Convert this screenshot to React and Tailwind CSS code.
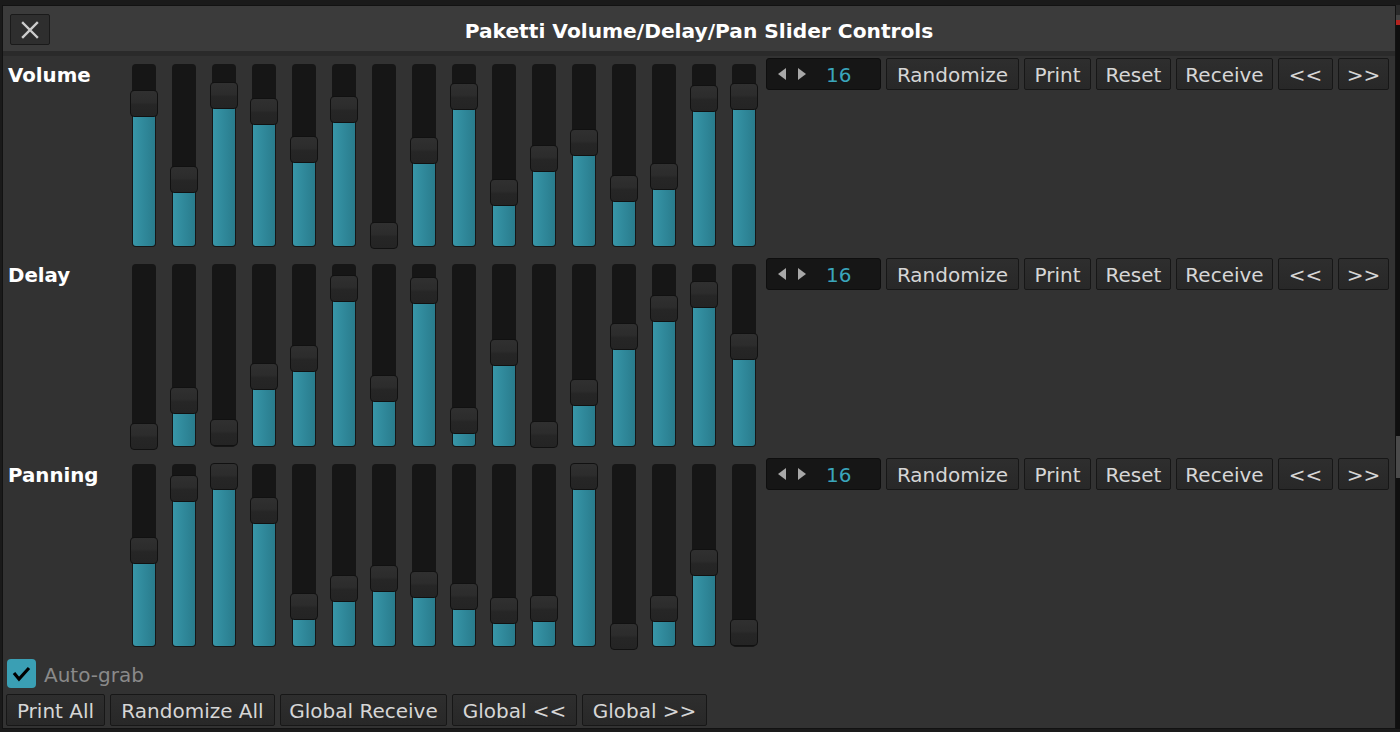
import React from "react";

const ROWS = [
  { label: "Volume", offs: [26, 102, 18, 34, 72, 32, 158, 73, 19, 115, 81, 65, 111, 99, 21, 19] },
  { label: "Delay", offs: [159, 123, 155, 99, 81, 11, 111, 13, 143, 75, 157, 115, 59, 31, 17, 69] },
  { label: "Panning", offs: [73, 11, -1, 33, 129, 111, 101, 107, 119, 133, 131, -1, 159, 131, 85, 155] },
];

function Slider({ off }) {
  return (
    <div className="w-[40px] flex justify-center">
      <div className="relative mt-[6px] w-[24px] h-[183px] rounded-[4px] bg-[#161616]">
        <div
          className="absolute left-[1px] right-[1px] bottom-[1px] rounded-b-[3px] bg-[linear-gradient(to_right,#3896a8,#318b9d_40%,#297b8c)]"
          style={{ top: off + 13 }}
        />
        <div
          className="absolute left-[-2px] w-[28px] h-[27px] rounded-[4px] border border-[#111111] bg-[linear-gradient(to_bottom,#303030,#2c2c2c_45%,#262626_55%,#242424)]"
          style={{ top: off }}
        />
      </div>
    </div>
  );
}

function Btn({ w, children }) {
  return (
    <div
      className={`${w} h-[32px] pt-[2px] flex items-center justify-center rounded-[2px] border border-[#171717] bg-[linear-gradient(to_bottom,#2e2e2e,#282828)] text-[20px] text-[#d6d6d6] leading-none`}
    >
      {children}
    </div>
  );
}

function Controls() {
  return (
    <div className="ml-[2px] flex gap-[5px] h-[32px]">
      <div className="w-[115px] h-[32px] rounded-[3px] border border-[#0e0e0e] bg-[#161616] flex items-center">
        <svg width="40" height="14" viewBox="0 0 40 14" className="ml-[10px]">
          <polygon points="9,1 9,13 1,7" fill="#a8a8a8" />
          <polygon points="21,1 21,13 29,7" fill="#a8a8a8" />
        </svg>
        <span className="ml-[9px] pt-[2px] text-[20px] leading-none text-[#3aa5bb]">16</span>
      </div>
      <Btn w="w-[133px]">Randomize</Btn>
      <Btn w="w-[67px]">Print</Btn>
      <Btn w="w-[75px]">Reset</Btn>
      <Btn w="w-[97px]">Receive</Btn>
      <Btn w="w-[55px]">&lt;&lt;</Btn>
      <Btn w="w-[51px]">&gt;&gt;</Btn>
    </div>
  );
}

export default function App() {
  return (
    <div className="w-[1400px] h-[732px] overflow-hidden bg-[#1a1a1a] font-['DejaVu_Sans',sans-serif] flex flex-col">
      <div className="flex pt-[5px] pl-[2px]">
        <div className="w-[1394px] h-[724px] border border-[#121212] bg-[#323232] flex flex-col">
          {/* title bar */}
          <div className="h-[45px] bg-[#3b3b3b] grid grid-cols-[1fr_auto_1fr] items-start">
            <div className="flex">
              <div className="ml-[7px] mt-[8px] w-[40px] h-[31px] rounded-[2px] border border-[#1a1a1a] bg-[#2e2e2e] flex items-center justify-center">
                <svg width="18" height="18" viewBox="0 0 18 18">
                  <path d="M2 2 L16 16 M16 2 L2 16" stroke="#cdcdcd" strokeWidth="2.4" strokeLinecap="square" />
                </svg>
              </div>
            </div>
            <div className="pt-[13px] text-[20.2px] leading-[24px] font-bold text-white">
              Paketti Volume/Delay/Pan Slider Controls
            </div>
            <div />
          </div>
          <div className="h-[5px] bg-[#2a2a2a]" />
          {/* rows */}
          <div className="pt-[2px] flex flex-col">
            {ROWS.map((r) => (
              <div key={r.label} className="h-[200px] flex">
                <div className="w-[121px] pl-[5px] mt-[6px] text-[19.8px] leading-[24px] font-bold text-white">
                  {r.label}
                </div>
                <div className="flex">
                  {r.offs.map((o, i) => (
                    <Slider key={i} off={o} />
                  ))}
                </div>
                <Controls />
              </div>
            ))}
          </div>
          {/* auto-grab */}
          <div className="mt-[1px] pl-[4px] flex items-center h-[29px]">
            <div className="w-[29px] h-[29px] rounded-[4px] bg-[#3a9fb4] flex items-center justify-center">
              <svg width="29" height="29" viewBox="0 0 29 29">
                <polyline points="7,14 12,20 22,9" fill="none" stroke="#000" strokeWidth="3.2" />
              </svg>
            </div>
            <span className="ml-[8px] pt-[2px] text-[20px] leading-none text-[#8a8a8a]">Auto-grab</span>
          </div>
          {/* bottom buttons */}
          <div className="mt-[6px] pl-[3px] flex gap-[5px]">
            <Btn w="w-[99px]">Print All</Btn>
            <Btn w="w-[165px]">Randomize All</Btn>
            <Btn w="w-[167px]">Global Receive</Btn>
            <Btn w="w-[125px]">Global &lt;&lt;</Btn>
            <Btn w="w-[125px]">Global &gt;&gt;</Btn>
          </div>
        </div>
        <div className="w-[4px] flex flex-col">
          <div className="h-[10px] bg-[#2a2a2a]" />
          <div className="h-[5px] bg-[#444]" />
          <div className="h-[5px] bg-[#b3231f]" />
          <div className="h-[411px] bg-[#0f0f0f]" />
          <div className="h-[42px] bg-[#4a4a4a]" />
          <div className="flex-1 bg-[#0f0f0f]" />
        </div>
      </div>
    </div>
  );
}
